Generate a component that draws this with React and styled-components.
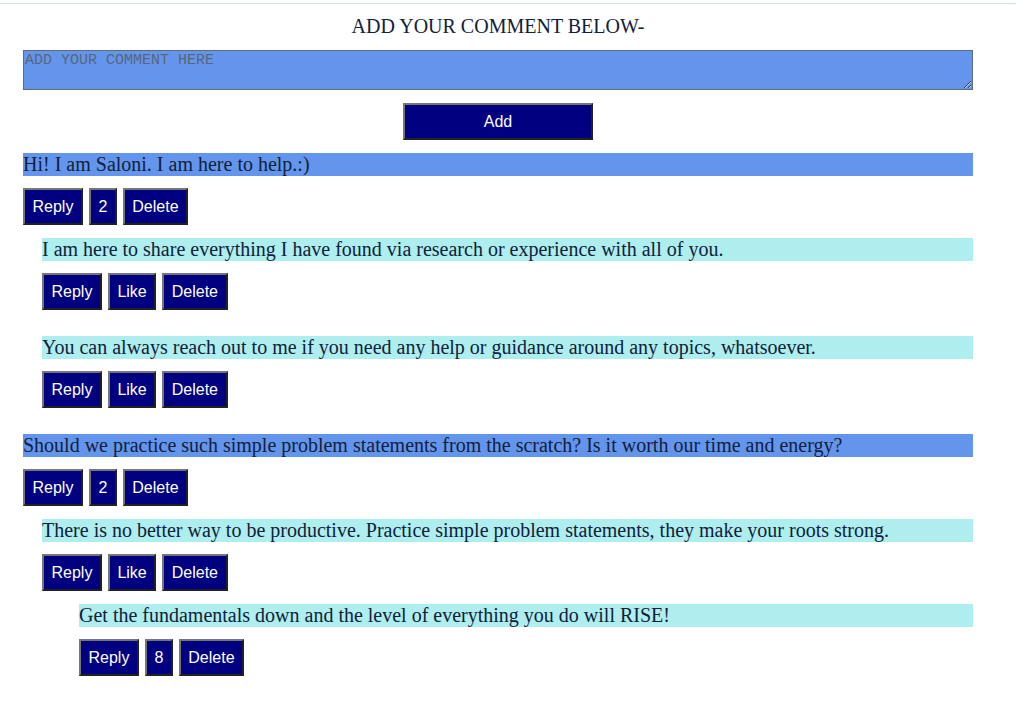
import React, { useState } from "react";
import styled, { createGlobalStyle } from "styled-components";

const GlobalStyle = createGlobalStyle`
  html, body {
    margin: 0;
    padding: 0;
    background: #ffffff;
  }
  body {
    font-family: "Liberation Serif", "Times New Roman", serif;
  }
`;

const initialComments = [
  {
    id: 1,
    text: "Hi! I am Saloni. I am here to help.:)",
    count: 2,
    replies: [
      {
        id: 11,
        text: "I am here to share everything I have found via research or experience with all of you.",
        replies: [],
      },
      {
        id: 12,
        text: "You can always reach out to me if you need any help or guidance around any topics, whatsoever.",
        replies: [],
      },
    ],
  },
  {
    id: 2,
    text: "Should we practice such simple problem statements from the scratch? Is it worth our time and energy?",
    count: 2,
    replies: [
      {
        id: 21,
        text: "There is no better way to be productive. Practice simple problem statements, they make your roots strong.",
        replies: [
          {
            id: 211,
            text: "Get the fundamentals down and the level of everything you do will RISE!",
            count: 8,
            replies: [],
          },
        ],
      },
    ],
  },
];

function Comment({ comment, depth }) {
  return (
    <Thread depth={depth}>
      <CommentText top={depth === 0}>{comment.text}</CommentText>
      <Actions>
        <ActionButton>Reply</ActionButton>
        <ActionButton>{comment.count ? comment.count : "Like"}</ActionButton>
        <ActionButton>Delete</ActionButton>
      </Actions>
      {comment.replies.length > 0 && (
        <Replies>
          {comment.replies.map((r) => (
            <Comment key={r.id} comment={r} depth={depth + 1} />
          ))}
        </Replies>
      )}
    </Thread>
  );
}

function App() {
  const [value, setValue] = useState("");

  return (
    <>
      <GlobalStyle />
      <TopRule />
      <Page>
        <Heading>ADD YOUR COMMENT BELOW-</Heading>
        <CommentInput
          placeholder="ADD YOUR COMMENT HERE"
          value={value}
          onChange={(e) => setValue(e.target.value)}
        />
        <AddRow>
          <AddButton>Add</AddButton>
        </AddRow>
        <List>
          {initialComments.map((c) => (
            <Comment key={c.id} comment={c} depth={0} />
          ))}
        </List>
      </Page>
    </>
  );
}

const TopRule = styled.div`
  margin-top: 3px;
  height: 1px;
  width: 1016px;
  background: #cfe2dc;
`;

const Page = styled.main`
  width: 950px;
  padding: 0 23px;
`;

const Heading = styled.h1`
  margin: 0;
  padding-top: 12px;
  height: 34px;
  text-align: center;
  font-size: 20px;
  font-weight: normal;
  line-height: 20px;
  color: #10213a;
`;

const CommentInput = styled.textarea`
  display: block;
  box-sizing: border-box;
  width: 950px;
  height: 40px;
  margin: 0;
  padding: 1px;
  background: #6495ed;
  border: 1px solid #5f6b7a;
  font-family: "Liberation Mono", monospace;
  font-size: 15px;
  &::placeholder {
    color: #5a6678;
  }
`;

const AddRow = styled.div`
  display: flex;
  justify-content: center;
  padding: 13px 0;
`;

const AddButton = styled.button`
  width: 190px;
  height: 37px;
  background: #000080;
  color: #ffffff;
  border: 2px outset #767676;
  font-family: "Liberation Sans", Arial, sans-serif;
  font-size: 16px;
  cursor: pointer;
`;

const List = styled.div`
  display: flex;
  flex-direction: column;
  gap: 26px;
`;

const Thread = styled.div`
  display: flex;
  flex-direction: column;
  margin-left: ${(p) => (p.depth === 0 ? 0 : p.depth === 1 ? 19 : 37)}px;
`;

const CommentText = styled.div`
  height: 23px;
  line-height: 23px;
  font-size: 20px;
  color: #10213a;
  white-space: nowrap;
  background: ${(p) => (p.top ? "#6495ed" : "#afeeee")};
`;

const Actions = styled.div`
  display: flex;
  gap: 6px;
  margin-top: 12px;
`;

const ActionButton = styled.button`
  height: 37px;
  padding: 0 7.5px;
  background: #000080;
  color: #ffffff;
  border: 2px outset #767676;
  font-family: "Liberation Sans", Arial, sans-serif;
  font-size: 16px;
  cursor: pointer;
`;

const Replies = styled.div`
  display: flex;
  flex-direction: column;
  gap: 26px;
  margin-top: 13px;
`;

export default App;
